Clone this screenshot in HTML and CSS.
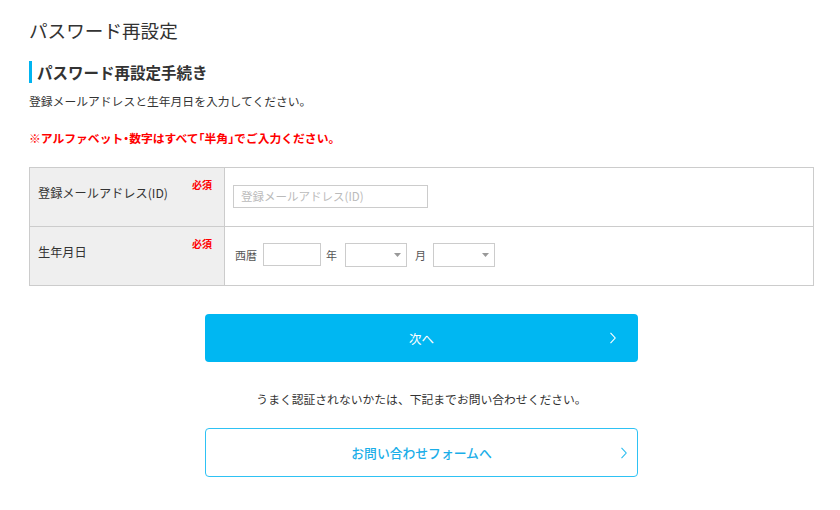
FILE: index.html
```html
<!DOCTYPE html>
<html lang="ja">
<head>
<meta charset="utf-8">
<title>パスワード再設定</title>
<link rel="stylesheet" href="styles.css">
</head>
<body>
<main class="page">
  <h1 class="page-title">パスワード再設定</h1>
  <h2 class="section-title">パスワード再設定手続き</h2>
  <p class="lead">登録メールアドレスと生年月日を入力してください。</p>
  <p class="notice">※アルファベット<span class="half">・</span>数字はすべて<span class="half">「</span>半角<span class="half">」</span>でご入力ください。</p>

  <div class="form-table">
    <div class="form-row">
      <div class="form-label">
        <span class="label-text">登録メールアドレス(ID)</span>
        <span class="required">必須</span>
      </div>
      <div class="form-field">
        <input class="text-input email-input" type="text" placeholder="登録メールアドレス(ID)">
      </div>
    </div>
    <div class="form-row">
      <div class="form-label">
        <span class="label-text">生年月日</span>
        <span class="required">必須</span>
      </div>
      <div class="form-field">
        <span class="unit unit-era">西暦</span>
        <input class="text-input year-input" type="text">
        <span class="unit unit-year">年</span>
        <div class="select-box">
          <svg class="select-arrow" width="7" height="4" viewBox="0 0 7 4"><path d="M0 0H7L3.5 4Z" fill="#999"/></svg>
        </div>
        <span class="unit unit-month">月</span>
        <div class="select-box">
          <svg class="select-arrow" width="7" height="4" viewBox="0 0 7 4"><path d="M0 0H7L3.5 4Z" fill="#999"/></svg>
        </div>
      </div>
    </div>
  </div>

  <div class="actions">
    <button class="btn btn-primary" type="button">
      <span>次へ</span>
      <svg class="chev chev-primary" width="6" height="12" viewBox="0 0 6 12"><path d="M0.5 0.8L5.2 6L0.5 11.2" fill="none" stroke="#fff" stroke-width="1.1"/></svg>
    </button>
    <p class="help">うまく認証されないかたは、下記までお問い合わせください。</p>
    <button class="btn btn-outline" type="button">
      <span>お問い合わせフォームへ</span>
      <svg class="chev chev-outline" width="6" height="12" viewBox="0 0 6 12"><path d="M0.5 0.8L5.2 6L0.5 11.2" fill="none" stroke="#2bbdf0" stroke-width="1.1"/></svg>
    </button>
  </div>
</main>
</body>
</html>
```

FILE: styles.css
```css
* { box-sizing: border-box; }

body {
  margin: 0;
  background: #fff;
  color: #333;
  font-family: "Noto Sans CJK JP", "Noto Sans", sans-serif;
}

.page {
  width: 785px;
  margin-left: 29px;
  padding-top: 20px;
}

.page-title {
  margin: 0;
  font-size: 18.6px;
  line-height: 20px;
  font-weight: 400;
  color: #333;
}

.section-title {
  margin: 21px 0 0;
  height: 22px;
  line-height: 22px;
  border-left: 3px solid #00b4f0;
  padding-left: 5px;
  font-size: 15.5px;
  font-weight: 700;
  color: #333;
}

.lead {
  margin: 9px 0 0;
  font-size: 11.8px;
  line-height: 18px;
  color: #333;
}

.notice {
  margin: 19px 0 0;
  font-size: 11.8px;
  line-height: 18px;
  font-weight: 700;
  color: #f00;
}

.half { font-feature-settings: "halt"; }

.form-table {
  margin-top: 20px;
  border-top: 1px solid #ccc;
  border-left: 1px solid #ccc;
  border-right: 1px solid #ccc;
}

.form-row {
  display: flex;
  height: 59px;
  border-bottom: 1px solid #ccc;
}

.form-label {
  width: 195px;
  flex: none;
  background: #efefef;
  border-right: 1px solid #ccc;
  display: flex;
  justify-content: space-between;
  align-items: flex-start;
  padding: 0 12px 0 8px;
}

.label-text {
  margin-top: 16px;
  font-size: 12.2px;
  line-height: 18px;
  color: #333;
}

.required {
  margin-top: 11px;
  font-size: 10px;
  line-height: 12px;
  font-weight: 700;
  color: #f00;
}

.form-field {
  flex: 1;
  display: flex;
  align-items: center;
  padding: 0 8px;
}

.text-input {
  height: 23px;
  border: 1px solid #ccc;
  border-radius: 0;
  padding: 0 7px;
  font-family: inherit;
  font-size: 11.5px;
  color: #333;
  background: #fff;
  outline: none;
}

.text-input::placeholder { color: #bbb; }

.email-input { width: 195px; margin-top: -2px; }

.form-row:nth-child(2) .form-field { padding-bottom: 3px; }

.year-input { width: 58px; }

.unit {
  font-size: 11px;
  line-height: 16px;
  color: #555;
}

.unit-era { margin: 0 6px 0 2px; }
.unit-year { margin: 0 8px 0 5px; }
.unit-month { margin: 0 7px 0 8px; }

.select-box {
  width: 62px;
  height: 24px;
  border: 1px solid #ccc;
  background: #fff;
  display: flex;
  align-items: center;
  justify-content: flex-end;
  padding-right: 5px;
}

.select-arrow { display: block; margin-top: 1px; }

.actions {
  display: flex;
  flex-direction: column;
  align-items: center;
}

.btn {
  position: relative;
  width: 433px;
  height: 48px;
  border-radius: 4px;
  font-family: inherit;
  font-size: 12.5px;
  cursor: pointer;
  display: flex;
  align-items: center;
  justify-content: center;
}

.btn-primary {
  margin-top: 28px;
  background: #00b7f2;
  border: none;
  color: #fff;
}

.btn-outline {
  margin-top: 20px;
  height: 49px;
  background: #fff;
  border: 1px solid #2ec2f4;
  color: #1aaee8;
  font-weight: 500;
  font-size: 12.8px;
}

.chev {
  position: absolute;
  top: 50%;
  margin-top: -6px;
}

.chev-primary { right: 22px; }
.chev-outline { right: 10px; }

.help {
  margin: 28px 0 0;
  font-size: 11.8px;
  line-height: 18px;
  color: #333;
}
```
